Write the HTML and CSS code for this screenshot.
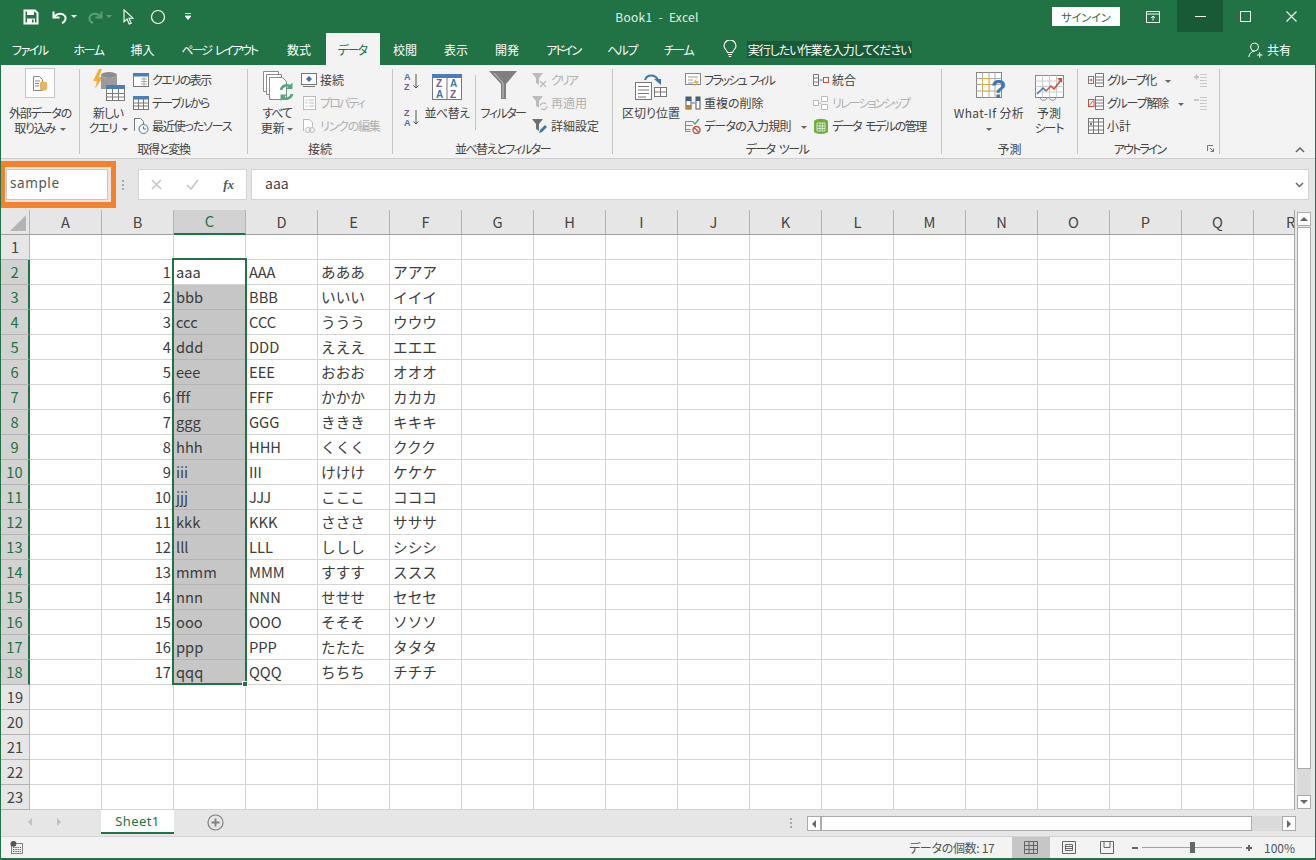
FILE: index.html
```html
<!DOCTYPE html>
<html lang="ja">
<head>
    <meta charset="UTF-8">
    <title>Book1 - Excel</title>
    <link rel="stylesheet" href="styles.css">
</head>
<body>
<div class="window">
    <div class="titlebar">
        <div class="qat">
            <svg class="qat-save" width="16" height="16" viewBox="0 0 16 16"><path d="M1.500 1.500h10.500l2.500 2.500v10.500h-13z" fill="none" stroke="#fff" stroke-width="2"/><rect x="4" y="2" width="7" height="4" fill="#fff"/><rect x="4" y="9.500" width="8" height="5" fill="#fff"/><rect x="9" y="10.500" width="1.500" height="3" fill="#217346"/></svg>
            <svg class="qat-undo" width="16" height="16" viewBox="0 0 16 16"><path d="M2.500 7.500c2-3 8-4 10.500-.5 1.500 2.500 0 6-3 7" fill="none" stroke="#fff" stroke-width="2"/><path d="M1.500 2.500v6h6" fill="none" stroke="#fff" stroke-width="2"/></svg>
            <span class="caret caret-white"></span>
            <svg class="qat-redo" width="16" height="16" viewBox="0 0 16 16"><path d="M13.500 7.500c-2-3-8-4-10.500-.5-1.500 2.500 0 6 3 7" fill="none" stroke="#5f9c7c" stroke-width="2"/><path d="M14.500 2.500v6h-6" fill="none" stroke="#5f9c7c" stroke-width="2"/></svg>
            <span class="caret caret-dim"></span>
            <svg class="qat-cursor" width="11" height="16" viewBox="0 0 11 16"><path d="M1 .8v12l3-2.800 2.200 5 2-.9-2.200-4.900h4z" fill="none" stroke="#fff" stroke-width="1.100"/></svg>
            <svg class="qat-circle" width="16" height="16" viewBox="0 0 16 16"><circle cx="8" cy="8" r="6.500" fill="none" stroke="#fff" stroke-width="1.200"/></svg>
            <svg class="qat-more" width="6" height="7" viewBox="0 0 6 7"><path d="M0 .5h6M0 3h6l-3 3.500z" fill="#fff" stroke="#fff" stroke-width=".8"/></svg>
        </div>
        <div class="doc-title">Book1&nbsp; -&nbsp; Excel</div>
        <div class="win-controls">
            <button class="signin">サインイン</button>
            <svg class="ctl-display" width="14" height="12" viewBox="0 0 14 12"><path d="M.5.500h13v11H.5zM.5 3h13" fill="none" stroke="#fff"/><path d="M7 9.500V5M5 7l2-2 2 2" fill="none" stroke="#fff"/></svg>
            <div class="ctl-min"><span class="min-line"></span></div>
            <div class="ctl-max"></div>
            <svg class="ctl-close" width="11" height="11" viewBox="0 0 11 11"><path d="M.5.500l10 10M10.500.500l-10 10" stroke="#fff" stroke-width="1.100"/></svg>
        </div>
    </div>

    <div class="tabs">
        <span class="tab tab-file tab-kana">ファイル</span>
        <span class="tab tab-kana">ホーム</span>
        <span class="tab">挿入</span>
        <span class="tab tab-kana-narrow tab-page gap">ページ レイアウト</span>
        <span class="tab">数式</span>
        <span class="tab tab-active tab-kana">データ</span>
        <span class="tab">校閲</span>
        <span class="tab">表示</span>
        <span class="tab">開発</span>
        <span class="tab tab-kana-narrow">アドイン</span>
        <span class="tab tab-kana">ヘルプ</span>
        <span class="tab tab-kana">チーム</span>
        <svg class="bulb" width="14" height="18" viewBox="0 0 14 18"><path d="M4.500 12.500C4 10 1 9 1 6a6 6 0 0 1 12 0c0 3-3 4-3.500 6.500zM5 14.500h4M5.800 16.500h2.400" fill="none" stroke="#fff" stroke-width="1.100"/></svg>
        <span class="tell-me">実行したい作業を入力してください</span>
        <span class="share">
            <svg width="15" height="16" viewBox="0 0 15 16"><circle cx="6.500" cy="5" r="4" fill="none" stroke="#fff"/><path d="M.8 15c.5-3.500 2.500-5.500 5.700-5.800M9 13h5.500M11.700 10.300v5.400" fill="none" stroke="#fff"/></svg>
            共有
        </span>
    </div>

    <div class="ribbon">
        <section class="group g-external">
            <div class="group-body">
                <div class="large">
                    <div class="icon-slot">
                        <div class="icon-box">
                            <svg width="20" height="20" viewBox="0 0 20 20"><path d="M3.500 3.500h6l3 3v11h-9z" fill="#fff" stroke="#8a8a8a"/><path d="M5 8h5M5 10.500h4M5 13h4" stroke="#8a8a8a"/><ellipse cx="13.500" cy="10" rx="3.500" ry="1.500" fill="#e8b45c"/><path d="M10 10v6c0 2 7 2 7 0v-6z" fill="#e8b45c"/></svg>
                        </div>
                    </div>
                    <span class="label tight">外部データの</span>
                    <span class="label tight gap">取り込み <i class="caret"></i></span>
                </div>
            </div>
            <div class="group-title">&nbsp;</div>
        </section>

        <section class="group g-get">
            <div class="group-body">
                <div class="large large-query">
                    <div class="icon-slot">
                        <svg width="33" height="34" viewBox="0 0 33 34"><path d="M7 1L1 13h4l-2 8 8-12H7l3-8z" fill="#f0b13c"/><ellipse cx="17" cy="7" rx="8" ry="3" fill="#8c8c8c"/><path d="M9 7v14h16V7c-1 4-15 4-16 0z" fill="#9b9b9b"/><rect x="14.500" y="17.500" width="18" height="15" fill="#fff" stroke="#7a7a7a"/><rect x="14" y="17" width="19" height="4" fill="#4a7ebb"/><path d="M14.500 25.500h18M14.500 29h18M20.500 21v11M26.500 21v11" stroke="#7a7a7a"/></svg>
                    </div>
                    <span class="label tight">新しい</span>
                    <span class="label tight gap">クエリ <i class="caret"></i></span>
                </div>
                <div class="small-col">
                    <div class="small">
                        <svg width="16" height="16" viewBox="0 0 16 16"><rect x=".5" y="1.500" width="15" height="13" fill="#fff" stroke="#777"/><rect y="1" width="16" height="3.500" fill="#4a7ebb"/><path d="M8 7h6M8 9.500h6M8 12h6M11 5v9" stroke="#aaa"/></svg>
                        <span class="tighter">クエリの表示</span>
                    </div>
                    <div class="small">
                        <svg width="16" height="16" viewBox="0 0 16 16"><rect x=".5" y="1.500" width="15" height="13" fill="#fff" stroke="#777"/><rect y="1" width="16" height="3.500" fill="#4a7ebb"/><path d="M.5 8h15M.5 11h15M5.500 4v10M10.500 4v10" stroke="#777"/></svg>
                        <span class="tighter">テーブルから</span>
                    </div>
                    <div class="small">
                        <svg width="16" height="16" viewBox="0 0 16 16"><path d="M1.500 13V.5h6l3 3v3" fill="#fff" stroke="#777"/><circle cx="10.500" cy="11" r="4.500" fill="#fff" stroke="#3f76b0"/><path d="M10.500 8.500V11h2.500" fill="none" stroke="#3f76b0"/></svg>
                        <span class="tight">最近使ったソース</span>
                    </div>
                </div>
            </div>
            <div class="group-title tight">取得と変換</div>
        </section>

        <section class="group g-conn">
            <div class="group-body">
                <div class="large large-refresh">
                    <div class="icon-slot">
                        <svg width="31" height="32" viewBox="0 0 31 32"><path d="M.5 1.500h15v20H.5z" fill="#fff" stroke="#8a8a8a"/><path d="M3.500 4.500h15v20h-15z" fill="#fff" stroke="#8a8a8a"/><path d="M6.500 7.500h13l4 4v18h-17z" fill="#fff" stroke="#8a8a8a"/><path d="M18 20a6 6 0 0 1 10-3" fill="none" stroke="#53a77f" stroke-width="2.600"/><path d="M29.500 12.500v6.500H23z" fill="#53a77f"/><path d="M29 24a6 6 0 0 1-10 3" fill="none" stroke="#53a77f" stroke-width="2.600"/><path d="M17.500 31v-6.500H24z" fill="#53a77f"/></svg>
                    </div>
                    <span class="label tight">すべて</span>
                    <span class="label">更新 <i class="caret"></i></span>
                </div>
                <div class="small-col">
                    <div class="small">
                        <svg width="16" height="16" viewBox="0 0 16 16"><rect x=".5" y="1.500" width="15" height="11" fill="#fff" stroke="#777"/><path d="M8 4l3 3-3 3-3-3z" fill="#3f76b0"/><path d="M2 14.500h12" stroke="#777"/></svg>
                        <span>接続</span>
                    </div>
                    <div class="small disabled">
                        <svg width="16" height="16" viewBox="0 0 16 16"><rect x="2.500" y="1.500" width="12" height="13" fill="#fff" stroke="#bbb"/><path d="M4.500 5h2M8 5h5M4.500 8h2M8 8h5M4.500 11h2M8 11h5" stroke="#bbb"/></svg>
                        <span class="tightest">プロパティ</span>
                    </div>
                    <div class="small disabled">
                        <svg width="16" height="16" viewBox="0 0 16 16"><path d="M2.500 13V1.500h6l3 3v4" fill="#fff" stroke="#bbb"/><circle cx="7" cy="12" r="2.500" fill="none" stroke="#bbb"/><circle cx="11" cy="12" r="2.500" fill="none" stroke="#bbb"/></svg>
                        <span class="tight">リンクの編集</span>
                    </div>
                </div>
            </div>
            <div class="group-title">接続</div>
        </section>

        <section class="group g-sort">
            <div class="group-body">
                <div class="sort-col">
                    <svg width="16" height="20" viewBox="0 0 16 20"><text class="sort-letter letter-blue" x="0" y="8.500">A</text><text class="sort-letter letter-purple" x="0" y="19">Z</text><path d="M12 3v14M9.500 14.500L12 17l2.500-2.500" fill="none" stroke="#555"/></svg>
                    <svg width="16" height="20" viewBox="0 0 16 20"><text class="sort-letter letter-purple" x="0" y="8.500">Z</text><text class="sort-letter letter-blue" x="0" y="19">A</text><path d="M12 3v14M9.500 14.500L12 17l2.500-2.500" fill="none" stroke="#555"/></svg>
                </div>
                <div class="large large-sort">
                    <div class="icon-slot">
                        <svg width="30" height="26" viewBox="0 0 30 26"><rect x=".5" y=".5" width="29" height="25" fill="#fff" stroke="#777"/><rect width="30" height="4" fill="#4a7ebb"/><path d="M15 4v22" stroke="#777"/><text class="sort-big letter-purple" x="4" y="13">Z</text><text class="sort-big letter-blue" x="18" y="13">A</text><text class="sort-big letter-blue" x="4" y="24">A</text><text class="sort-big letter-purple" x="18" y="24">Z</text></svg>
                    </div>
                    <span class="label slight">並べ替え</span>
                </div>
                <div class="divider"></div>
                <div class="large large-filter">
                    <div class="icon-slot">
                        <svg width="28" height="28" viewBox="0 0 28 28"><path d="M0 0h28L17 13v15h-5V13z" fill="#7f7f7f"/><path d="M5 2l9 10v15" fill="none" stroke="#c4c4c4"/></svg>
                    </div>
                    <span class="label tighter">フィルター</span>
                </div>
                <div class="small-col">
                    <div class="small disabled">
                        <svg width="16" height="16" viewBox="0 0 16 16"><path d="M0 1h11L7 6v7l-3-2V6z" fill="#bbb"/><path d="M8 9l6 6M14 9l-6 6" stroke="#bbb" stroke-width="1.400"/></svg>
                        <span class="tightest">クリア</span>
                    </div>
                    <div class="small disabled">
                        <svg width="16" height="16" viewBox="0 0 16 16"><path d="M0 1h11L7 6v7l-3-2V6z" fill="#bbb"/><path d="M8 11a3.500 3.500 0 0 1 6-2M15 11a3.500 3.500 0 0 1-6 2.500" fill="none" stroke="#bbb" stroke-width="1.300"/></svg>
                        <span>再適用</span>
                    </div>
                    <div class="small">
                        <svg width="16" height="16" viewBox="0 0 16 16"><path d="M0 1h11L7 6v7l-3-2V6z" fill="#6f6f6f"/><path d="M7 15l1-3 5-5 2 2-5 5z" fill="#3f76b0"/></svg>
                        <span>詳細設定</span>
                    </div>
                </div>
            </div>
            <div class="group-title tighter">並べ替えとフィルター</div>
        </section>

        <section class="group g-tools">
            <div class="group-body">
                <div class="large large-split">
                    <div class="icon-slot">
                        <svg width="32" height="27" viewBox="0 0 32 27"><rect x=".5" y="9.500" width="16" height="17" fill="#fff" stroke="#777"/><path d="M3 13.500h11M3 17h11M3 20.500h11M3 24h8" stroke="#777"/><rect x="19.500" y="14.500" width="12" height="9" fill="#fff" stroke="#777"/><path d="M19.500 19h12M25.500 14.500v9" stroke="#777"/><path d="M10 7c2-6 10-6 13 0" fill="none" stroke="#3f76b0" stroke-width="2"/><path d="M19 6h7v6z" fill="#3f76b0"/></svg>
                    </div>
                    <span class="label">区切り位置</span>
                </div>
                <div class="small-col col-tools">
                    <div class="small">
                        <svg width="16" height="16" viewBox="0 0 16 16"><rect x=".5" y="1.500" width="15" height="11" fill="#fff" stroke="#888"/><path d="M3 5h10M3 8h5M3 11h5" stroke="#999"/><path d="M12 6l-4 5h3l-1 4 4-6h-3z" fill="#f0b13c"/></svg>
                        <span class="tightest gap">フラッシュ フィル</span>
                    </div>
                    <div class="small">
                        <svg width="16" height="16" viewBox="0 0 16 16"><rect x="1" y="2" width="5" height="12" fill="#fff" stroke="#555"/><rect x="1" y="2" width="5" height="4" fill="#3f5f85"/><rect x="1" y="10" width="5" height="4" fill="#b08a3a"/><rect x="11" y="2" width="4" height="12" fill="#fff" stroke="#555"/><rect x="11" y="2" width="4" height="4" fill="#3f5f85"/><path d="M7 8h3" stroke="#3f76b0"/></svg>
                        <span>重複の削除</span>
                    </div>
                    <div class="small">
                        <svg width="16" height="16" viewBox="0 0 16 16"><path d="M.5 3.500h8M.5 7.500h7M.5 11.500h5M.5 3.500v10h5" fill="none" stroke="#888"/><path d="M8 4l2 2 4-5" fill="none" stroke="#53a77f" stroke-width="1.500"/><circle cx="11.500" cy="12" r="3.500" fill="#fff" stroke="#c8503c" stroke-width="1.400"/><path d="M9 9.500l5 5" stroke="#c8503c" stroke-width="1.400"/></svg>
                        <span class="slightish">データの入力規則 <i class="caret caret-wide"></i></span>
                    </div>
                </div>
                <div class="small-col">
                    <div class="small">
                        <svg width="16" height="16" viewBox="0 0 16 16"><path d="M.5 2.500h5v11h-5zM.5 6h5M.5 10h5" fill="#fff" stroke="#777"/><path d="M6.500 8h3" stroke="#3f76b0"/><rect x="10.500" y="5.500" width="5" height="5" fill="#fff" stroke="#c8503c"/></svg>
                        <span>統合</span>
                    </div>
                    <div class="small disabled">
                        <svg width="16" height="16" viewBox="0 0 16 16"><path d="M.5 5.500h5v5h-5zM8.500 1.500h6v5h-6zM8.500 9.500h6v5h-6zM5.500 8h3" fill="#fff" stroke="#bbb"/></svg>
                        <span class="tightest">リレーションシップ</span>
                    </div>
                    <div class="small">
                        <svg width="16" height="16" viewBox="0 0 16 16"><path d="M1 3c3-3 11-3 14 0v11c-3 2.500-11 2.500-14 0z" fill="#6cae3f"/><path d="M4 5h8v8H4zM4 8h8M4 10.500h8M7 5v8M9.500 5v8" fill="none" stroke="#e5f1da" stroke-width=".8"/></svg>
                        <span class="tighter gap">データ モデルの管理</span>
                    </div>
                </div>
            </div>
            <div class="group-title tighter gap">データ ツール</div>
        </section>

        <section class="group g-forecast">
            <div class="group-body">
                <div class="large large-whatif">
                    <div class="icon-slot">
                        <svg width="31" height="30" viewBox="0 0 31 30"><rect x=".5" y=".5" width="25" height="25" fill="#fff" stroke="#888"/><path d="M.5 6.500h25M.5 12.500h25M.5 19h25M6.500.5v25M13 .5v25M19 .5v25" stroke="#aaa"/><path d="M6.500 6.500H13v6H6.500zM6.500 12.500H13V19H6.500z" fill="#fff" stroke="#e0a93c"/><text class="whatif-mark" x="15" y="26">?</text></svg>
                    </div>
                    <span class="label wide">What-If 分析</span>
                    <span class="label"><i class="caret"></i></span>
                </div>
                <div class="large large-forecast">
                    <div class="icon-slot">
                        <svg width="29" height="27" viewBox="0 0 29 27"><rect x=".5" y=".5" width="28" height="22" fill="#fff" stroke="#888"/><path d="M.5 6h28M.5 11.500h28M.5 17h28M7.500.5v22M14.500.5v22M21.500.5v22" stroke="#ccc"/><path d="M2 19l6-6 3 3" fill="none" stroke="#3f76b0" stroke-width="1.500"/><path d="M11 16l5-5 3 3 7-9" fill="none" stroke="#c8503c" stroke-width="1.500"/><path d="M22 3h5v5z" fill="#c8503c"/><path d="M5 23c1 3 6 3 7 0M14 23c1 3 6 3 7 0" fill="none" stroke="#888"/></svg>
                    </div>
                    <span class="label">予測</span>
                    <span class="label tight">シート</span>
                </div>
            </div>
            <div class="group-title">予測</div>
        </section>

        <section class="group g-outline">
            <div class="group-body">
                <div class="small-col col-outline">
                    <div class="small">
                        <svg width="16" height="16" viewBox="0 0 16 16"><rect x=".5" y="4.500" width="5" height="7" fill="#fff" stroke="#777"/><path d="M1.500 8h3M3 6.500v3" stroke="#c8503c"/><path d="M7.500 1.500h8v13h-8zM7.500 5h8M7.500 8h8M7.500 11h8" fill="#fff" stroke="#777"/></svg>
                        <span class="tighter">グループ化 <i class="caret caret-wide"></i></span>
                    </div>
                    <div class="small">
                        <svg width="16" height="16" viewBox="0 0 16 16"><rect x=".5" y="4.500" width="5.500" height="7" fill="#fff" stroke="#c8503c"/><path d="M1.500 10.500l3.500-5" stroke="#c8503c"/><path d="M7.500 1.500h8v13h-8zM7.500 5h8M7.500 8h8M7.500 11h8" fill="#fff" stroke="#777"/></svg>
                        <span class="tight">グループ解除 <i class="caret caret-wide"></i></span>
                    </div>
                    <div class="small">
                        <svg width="16" height="16" viewBox="0 0 16 16"><rect x=".5" y=".5" width="15" height="15" fill="#fff" stroke="#777"/><path d="M5.500.5v15M.5 4h15M.5 8h15M.5 12h15M10.500.5v15" stroke="#777"/><path d="M2 6h2M3 5v2" stroke="#555"/></svg>
                        <span>小計</span>
                    </div>
                </div>
                <div class="small-col">
                    <div class="small disabled">
                        <svg width="16" height="16" viewBox="0 0 16 16"><path d="M1 5h5M3.500 2.500v5" stroke="#bbb" stroke-width="1.500"/><path d="M7 2.500h7M7 5.500h7M7 8.500h7M7 11.500h7M7 14.500h7" stroke="#c8c8c8"/></svg>
                    </div>
                    <div class="small disabled">
                        <svg width="16" height="16" viewBox="0 0 16 16"><path d="M1 5h5" stroke="#bbb" stroke-width="1.500"/><path d="M7 2.500h7M7 5.500h7M7 8.500h7M7 11.500h7M7 14.500h7" stroke="#c8c8c8"/></svg>
                    </div>
                </div>
            </div>
            <div class="group-title title-outline tightest">
                アウトライン
                <svg class="launcher" width="7" height="7" viewBox="0 0 7 7"><path d="M.5 6V.5H6M3 3l3.500 3.500M3.500 6.500h3v-3" fill="none" stroke="#777"/></svg>
            </div>
        </section>

        <svg class="collapse" width="10" height="6" viewBox="0 0 10 6"><path d="M1 5l4-4 4 4" fill="none" stroke="#666" stroke-width="1.500"/></svg>
    </div>

    <div class="formula-bar">
        <div class="name-box">sample</div>
        <div class="grip"></div>
        <div class="fx-box">
            <svg width="11" height="11" viewBox="0 0 11 11"><path d="M1 1l9 9M10 1l-9 9" stroke="#c4c4c4" stroke-width="1.500"/></svg>
            <svg width="13" height="11" viewBox="0 0 13 11"><path d="M1 6l4 4 7-9" fill="none" stroke="#c4c4c4" stroke-width="1.500"/></svg>
            <span class="fx">fx</span>
        </div>
        <div class="formula-input">
            <span class="formula-text">aaa</span>
            <svg width="9" height="6" viewBox="0 0 9 6"><path d="M1 1l3.500 3.500L8 1" fill="none" stroke="#666" stroke-width="1.500"/></svg>
        </div>
    </div>
    <div class="name-highlight"></div>

    <div class="sheet-area">
        <div class="grid-view">
            <table class="grid">
                <colgroup>
                    <col class="col-head"><col span="18" class="col-cell">
                </colgroup>
                <thead>
                    <tr><th class="corner"><span class="corner-mark"></span></th><th>A</th><th>B</th><th class="sel">C</th><th>D</th><th>E</th><th>F</th><th>G</th><th>H</th><th>I</th><th>J</th><th>K</th><th>L</th><th>M</th><th>N</th><th>O</th><th>P</th><th>Q</th><th class="col-r">R</th></tr>
                </thead>
                <tbody>
                    <tr><th>1</th><td></td><td></td><td></td><td></td><td></td><td></td><td></td><td></td><td></td><td></td><td></td><td></td><td></td><td></td><td></td><td></td><td></td><td></td></tr>
                    <tr><th class="sel">2</th><td></td><td class="num">1</td><td class="active">aaa</td><td>AAA</td><td>あああ</td><td>アアア</td><td></td><td></td><td></td><td></td><td></td><td></td><td></td><td></td><td></td><td></td><td></td><td></td></tr>
                    <tr><th class="sel">3</th><td></td><td class="num">2</td><td class="sel">bbb</td><td>BBB</td><td>いいい</td><td>イイイ</td><td></td><td></td><td></td><td></td><td></td><td></td><td></td><td></td><td></td><td></td><td></td><td></td></tr>
                    <tr><th class="sel">4</th><td></td><td class="num">3</td><td class="sel">ccc</td><td>CCC</td><td>ううう</td><td>ウウウ</td><td></td><td></td><td></td><td></td><td></td><td></td><td></td><td></td><td></td><td></td><td></td><td></td></tr>
                    <tr><th class="sel">5</th><td></td><td class="num">4</td><td class="sel">ddd</td><td>DDD</td><td>えええ</td><td>エエエ</td><td></td><td></td><td></td><td></td><td></td><td></td><td></td><td></td><td></td><td></td><td></td><td></td></tr>
                    <tr><th class="sel">6</th><td></td><td class="num">5</td><td class="sel">eee</td><td>EEE</td><td>おおお</td><td>オオオ</td><td></td><td></td><td></td><td></td><td></td><td></td><td></td><td></td><td></td><td></td><td></td><td></td></tr>
                    <tr><th class="sel">7</th><td></td><td class="num">6</td><td class="sel">fff</td><td>FFF</td><td>かかか</td><td>カカカ</td><td></td><td></td><td></td><td></td><td></td><td></td><td></td><td></td><td></td><td></td><td></td><td></td></tr>
                    <tr><th class="sel">8</th><td></td><td class="num">7</td><td class="sel">ggg</td><td>GGG</td><td>ききき</td><td>キキキ</td><td></td><td></td><td></td><td></td><td></td><td></td><td></td><td></td><td></td><td></td><td></td><td></td></tr>
                    <tr><th class="sel">9</th><td></td><td class="num">8</td><td class="sel">hhh</td><td>HHH</td><td>くくく</td><td>ククク</td><td></td><td></td><td></td><td></td><td></td><td></td><td></td><td></td><td></td><td></td><td></td><td></td></tr>
                    <tr><th class="sel">10</th><td></td><td class="num">9</td><td class="sel">iii</td><td>III</td><td>けけけ</td><td>ケケケ</td><td></td><td></td><td></td><td></td><td></td><td></td><td></td><td></td><td></td><td></td><td></td><td></td></tr>
                    <tr><th class="sel">11</th><td></td><td class="num">10</td><td class="sel">jjj</td><td>JJJ</td><td>こここ</td><td>コココ</td><td></td><td></td><td></td><td></td><td></td><td></td><td></td><td></td><td></td><td></td><td></td><td></td></tr>
                    <tr><th class="sel">12</th><td></td><td class="num">11</td><td class="sel">kkk</td><td>KKK</td><td>さささ</td><td>サササ</td><td></td><td></td><td></td><td></td><td></td><td></td><td></td><td></td><td></td><td></td><td></td><td></td></tr>
                    <tr><th class="sel">13</th><td></td><td class="num">12</td><td class="sel">lll</td><td>LLL</td><td>ししし</td><td>シシシ</td><td></td><td></td><td></td><td></td><td></td><td></td><td></td><td></td><td></td><td></td><td></td><td></td></tr>
                    <tr><th class="sel">14</th><td></td><td class="num">13</td><td class="sel">mmm</td><td>MMM</td><td>すすす</td><td>ススス</td><td></td><td></td><td></td><td></td><td></td><td></td><td></td><td></td><td></td><td></td><td></td><td></td></tr>
                    <tr><th class="sel">15</th><td></td><td class="num">14</td><td class="sel">nnn</td><td>NNN</td><td>せせせ</td><td>セセセ</td><td></td><td></td><td></td><td></td><td></td><td></td><td></td><td></td><td></td><td></td><td></td><td></td></tr>
                    <tr><th class="sel">16</th><td></td><td class="num">15</td><td class="sel">ooo</td><td>OOO</td><td>そそそ</td><td>ソソソ</td><td></td><td></td><td></td><td></td><td></td><td></td><td></td><td></td><td></td><td></td><td></td><td></td></tr>
                    <tr><th class="sel">17</th><td></td><td class="num">16</td><td class="sel">ppp</td><td>PPP</td><td>たたた</td><td>タタタ</td><td></td><td></td><td></td><td></td><td></td><td></td><td></td><td></td><td></td><td></td><td></td><td></td></tr>
                    <tr><th class="sel">18</th><td></td><td class="num">17</td><td class="sel">qqq</td><td>QQQ</td><td>ちちち</td><td>チチチ</td><td></td><td></td><td></td><td></td><td></td><td></td><td></td><td></td><td></td><td></td><td></td><td></td></tr>
                    <tr><th>19</th><td></td><td></td><td></td><td></td><td></td><td></td><td></td><td></td><td></td><td></td><td></td><td></td><td></td><td></td><td></td><td></td><td></td><td></td></tr>
                    <tr><th>20</th><td></td><td></td><td></td><td></td><td></td><td></td><td></td><td></td><td></td><td></td><td></td><td></td><td></td><td></td><td></td><td></td><td></td><td></td></tr>
                    <tr><th>21</th><td></td><td></td><td></td><td></td><td></td><td></td><td></td><td></td><td></td><td></td><td></td><td></td><td></td><td></td><td></td><td></td><td></td><td></td></tr>
                    <tr><th>22</th><td></td><td></td><td></td><td></td><td></td><td></td><td></td><td></td><td></td><td></td><td></td><td></td><td></td><td></td><td></td><td></td><td></td><td></td></tr>
                    <tr><th>23</th><td></td><td></td><td></td><td></td><td></td><td></td><td></td><td></td><td></td><td></td><td></td><td></td><td></td><td></td><td></td><td></td><td></td><td></td></tr>
                </tbody>
            </table>
            <div class="selection"><span class="fill-handle"></span></div>
        </div>
        <div class="vscroll">
            <div class="sb-btn"><i class="tri tri-up"></i></div>
            <div class="vthumb"></div>
            <div class="sb-track"></div>
            <div class="sb-btn"><i class="tri tri-down"></i></div>
        </div>
    </div>

    <div class="tabbar">
        <div class="sheet-nav">
            <i class="tri tri-left tri-dim"></i>
            <i class="tri tri-right tri-dim"></i>
        </div>
        <div class="sheet-tab">Sheet1</div>
        <svg class="add-sheet" width="17" height="17" viewBox="0 0 17 17"><circle cx="8.500" cy="8.500" r="7.500" fill="none" stroke="#808080" stroke-width="1.200"/><path d="M8.500 4.500v8M4.500 8.500h8" stroke="#808080" stroke-width="1.800"/></svg>
        <div class="grip grip-tab"></div>
        <div class="hscroll">
            <div class="sb-btn"><i class="tri tri-left"></i></div>
            <div class="hthumb"></div>
            <div class="sb-track"></div>
            <div class="sb-btn"><i class="tri tri-right"></i></div>
        </div>
    </div>

    <div class="statusbar">
        <svg class="macro" width="13" height="13" viewBox="0 0 13 13"><circle cx="3.500" cy="3" r="3" fill="#666"/><rect x="1.500" y="2.500" width="11" height="10" fill="#f3f3f3" stroke="#666" stroke-width=".8"/><circle cx="3.500" cy="3" r="2.800" fill="#555"/><path d="M3 6.500h8M3 8.500h8M3 10.500h8" stroke="#666" stroke-dasharray="1.500 .8"/></svg>
        <span class="status-text">データの個数: 17</span>
        <div class="view-btn view-active">
            <svg width="14" height="13" viewBox="0 0 14 13"><path d="M.5.500h13v12H.5zM.5 4.500h13M.5 8.500h13M5 .5v12M9.500.5v12" fill="none" stroke="#666"/></svg>
        </div>
        <div class="view-btn">
            <svg width="14" height="13" viewBox="0 0 14 13"><path d="M.5.500h13v12H.5zM3.500 3.500h7v6h-7zM3.500 5.500h7M3.500 7.500h7" fill="none" stroke="#666"/></svg>
        </div>
        <div class="view-btn">
            <svg width="14" height="13" viewBox="0 0 14 13"><path d="M.5.500h13v12H.5zM4 .5v6h6v-6" fill="none" stroke="#666"/></svg>
        </div>
        <div class="zoom">
            <span class="zoom-sign"></span>
            <div class="zoom-track"><span class="zoom-thumb"></span></div>
            <span class="zoom-sign zoom-plus"></span>
            <span class="zoom-value">100%</span>
        </div>
    </div>
</div>
</body>
</html>
```

FILE: styles.css
```css
* {
    box-sizing: border-box;
}
body {
    margin: 0;
    background: #217346;
    font-family: "Noto Sans CJK JP", "Noto Sans", sans-serif;
    font-size: 12px;
    color: #444;
    font-feature-settings: "palt";
}
.window {
    position: relative;
    display: flex;
    flex-direction: column;
    width: 1316px;
    height: 860px;
    overflow: hidden;
    border: 1px solid #217346;
    border-top: 0;
    border-bottom-width: 2px;
    background: #217346;
}
svg {
    display: block;
    flex: none;
}

/* kana in the ribbon runs narrower than this font */
.slight {
    letter-spacing: -.5px;
}
.slightish {
    letter-spacing: -.8px;
}
.tight {
    letter-spacing: -1.2px;
}
.tighter {
    letter-spacing: -1.5px;
}
.tightest {
    letter-spacing: -1.9px;
}
.wide {
    letter-spacing: .35px;
}
.gap {
    word-spacing: 3px;
}

/* title bar */
.titlebar {
    display: flex;
    align-items: center;
    justify-content: space-between;
    height: 33px;
    color: #fff;
}
.qat {
    display: flex;
    align-items: center;
    width: 300px;
    padding-left: 22px;
}
.qat-undo {
    margin-left: 13px;
}
.qat-redo {
    margin-left: 10px;
}
.qat-cursor {
    margin-left: 11px;
}
.qat-circle {
    margin-left: 16px;
}
.qat-more {
    margin-left: 19px;
}
.doc-title {
    position: absolute;
    left: 556px;
    top: 8px;
    width: 200px;
    text-align: center;
    letter-spacing: .3px;
    color: #e4efe9;
}
.win-controls {
    display: flex;
    align-items: center;
    height: 33px;
}
.signin {
    width: 68px;
    height: 19px;
    margin-right: 26px;
    padding: 0;
    border: 0;
    background: #fff;
    color: #217346;
    font: inherit;
    font-size: 11px;
}
.ctl-min {
    display: flex;
    align-items: center;
    justify-content: center;
    width: 46px;
    height: 32px;
    margin: 0 0 1px 17px;
    background: #185a36;
}
.min-line {
    width: 11px;
    height: 1px;
    background: #fff;
}
.ctl-max {
    width: 11px;
    height: 11px;
    margin: 0 35px 0 17px;
    border: 1px solid #fff;
}
.ctl-close {
    margin-right: 18px;
}

/* ribbon tabs */
.tabs {
    position: relative;
    display: flex;
    align-items: center;
    height: 32px;
}
.tab {
    display: flex;
    align-items: center;
    height: 32px;
    padding: 0 13.5px;
    color: #fff;
    white-space: nowrap;
}
.tab-kana {
    letter-spacing: -1.5px;
}
.tab-kana-narrow {
    letter-spacing: -2px;
}
.tab-file {
    padding: 0 12.5px 0 11px;
}
.tab-page {
    margin-right: 3px;
}
.tab-active {
    padding: 0 13px 0 12px;
    margin: 0 0 0 1px;
    background: #f3f3f3;
    color: #217346;
}
.bulb {
    margin-left: 16px;
}
.tell-me {
    margin-left: 10px;
    padding: 0 1px;
    height: 17px;
    line-height: 17px;
    background: #185a36;
    color: #fff;
    letter-spacing: -1px;
    white-space: nowrap;
}
.share {
    display: flex;
    align-items: center;
    gap: 4px;
    position: absolute;
    left: 1247px;
    top: 8px;
    color: #fff;
}

.ribbon {
    position: relative;
    display: flex;
    flex: none;
    height: 94px;
    padding-top: 4px;
    border-bottom: 1px solid #cfcfcf;
    background: #f3f3f3;
}
.group {
    display: flex;
    flex-direction: column;
    flex: none;
    height: 85px;
    border-right: 1px solid #c6c6c6;
}
.g-external {
    width: 79px;
}
.g-get {
    width: 168px;
}
.g-conn {
    width: 145px;
}
.g-sort {
    width: 220px;
}
.g-tools {
    width: 329px;
}
.g-forecast {
    width: 136px;
}
.g-outline {
    width: 142px;
}
.group-body {
    display: flex;
    height: 72px;
}
.group-title {
    height: 14px;
    line-height: 17px;
    text-align: center;
    white-space: nowrap;
}
.title-outline {
    position: relative;
    padding-right: 18px;
}
.launcher {
    position: absolute;
    right: 5px;
    top: 5px;
}
.collapse {
    position: absolute;
    left: 1294px;
    top: 82px;
}
.large {
    display: flex;
    flex-direction: column;
    align-items: center;
    flex: none;
    white-space: nowrap;
}
.label {
    height: 15px;
    line-height: 15px;
}
.icon-slot {
    display: flex;
    align-items: flex-end;
    justify-content: center;
    height: 36px;
    padding-bottom: 3px;
}
.icon-box {
    display: flex;
    align-items: center;
    justify-content: center;
    width: 30px;
    height: 30px;
    margin-bottom: 4px;
    border: 1px solid #c6c6c6;
    background: #fcfcfc;
}
.g-external .large {
    width: 78px;
}
.large-query {
    width: 40px;
    margin-left: 8px;
}
.small-col {
    display: flex;
    flex-direction: column;
    flex: none;
}
.small {
    display: flex;
    align-items: center;
    gap: 3px;
    height: 23px;
    padding-bottom: 2px;
    white-space: nowrap;
}
.disabled {
    color: #b1b1b1;
}
.g-get .small-col {
    margin-left: 5px;
}
.large-refresh {
    width: 40px;
    margin-left: 9px;
}
.large-refresh svg {
    margin-left: 2px;
}
.g-conn .small-col {
    margin-left: 4px;
}
.sort-col {
    display: flex;
    flex-direction: column;
    gap: 16px;
    width: 20px;
    margin: 2px 0 0 11px;
}
.sort-letter {
    font-family: "Liberation Sans", sans-serif;
    font-size: 9px;
    font-weight: 700;
}
.sort-big {
    font-family: "Liberation Sans", sans-serif;
    font-size: 10px;
    font-weight: 700;
}
.letter-blue {
    fill: #3f76b0;
}
.letter-purple {
    fill: #7a5a9e;
}
.large-sort {
    width: 46px;
}
.large-sort .icon-slot {
    padding-bottom: 5px;
}
.large-filter {
    width: 48px;
}
.large-filter .icon-slot {
    padding-bottom: 6px;
}
.divider {
    width: 1px;
    height: 55px;
    margin: 6px 3px 0 5px;
    background: #c6c6c6;
}
.g-sort .small-col {
    margin-left: 5px;
}
.large-split {
    width: 60px;
    margin-left: 8px;
}
.large-split .icon-slot {
    padding-bottom: 5px;
}
.col-tools {
    width: 128px;
    margin-left: 4px;
}
.caret {
    display: inline-block;
    width: 0;
    height: 0;
    vertical-align: middle;
    border-left: 3px solid transparent;
    border-right: 3px solid transparent;
    border-top: 3px solid #666;
}
.caret-wide {
    margin-left: 8px;
}
.caret-white {
    margin-left: 3px;
    border-top-color: #fff;
}
.caret-dim {
    margin-left: 3px;
    border-top-color: #5f9c7c;
}
.large-whatif {
    width: 76px;
    margin-left: 9px;
}
.large-whatif .icon-slot {
    padding-left: 4px;
}
.whatif-mark {
    font-family: "Liberation Sans", sans-serif;
    font-size: 25px;
    font-weight: 700;
    fill: #3f76b0;
}
.large-forecast {
    width: 36px;
    margin-left: 4px;
}
.col-outline {
    width: 105px;
    margin-left: 10px;
}

/* formula bar */
.formula-bar {
    display: flex;
    align-items: center;
    flex: none;
    height: 51px;
    background: #e6e6e6;
}
.name-box {
    width: 102px;
    height: 31px;
    margin-left: 5px;
    padding-left: 3px;
    line-height: 26px;
    border: 1px solid #c6c6c6;
    background: #fff;
    font-family: "Noto Sans", sans-serif;
    font-size: 13.5px;
    letter-spacing: .6px;
    color: #555;
}
.grip {
    width: 2px;
    height: 10px;
    margin: 0 14px;
    background: repeating-linear-gradient(#a8a8a8 0 2px, transparent 2px 4px);
}
.fx-box {
    display: flex;
    align-items: center;
    justify-content: space-between;
    width: 109px;
    height: 31px;
    padding: 0 12px;
    border: 1px solid #d4d4d4;
    background: #fff;
}
.fx {
    font-family: "Liberation Serif", serif;
    font-size: 13px;
    font-style: italic;
    font-weight: 700;
    color: #555;
}
.formula-input {
    display: flex;
    align-items: center;
    justify-content: space-between;
    width: 1058px;
    height: 31px;
    margin-left: 4px;
    padding: 0 4px 0 13px;
    border: 1px solid #d4d4d4;
    background: #fff;
    font-size: 14px;
    color: #444;
}
.formula-text {
    margin-bottom: 3px;
}
.name-highlight {
    position: absolute;
    left: -1px;
    top: 161px;
    width: 116px;
    height: 47px;
    border: 5px solid #f5822a;
    border-top-width: 6px;
    border-bottom-width: 6px;
}

/* sheet */
.sheet-area {
    display: flex;
    flex: none;
    height: 600px;
    background: #e6e6e6;
}
.grid-view {
    position: relative;
    width: 1294px;
    overflow: hidden;
    border-right: 1px solid #a6a6a6;
}
.grid {
    table-layout: fixed;
    width: 1325px;
    border-collapse: separate;
    border-spacing: 0;
    background: #fff;
    font-size: 14.67px;
    font-feature-settings: normal;
}
.col-head {
    width: 29px;
}
.col-cell {
    width: 72px;
}
.grid th {
    height: 25px;
    padding: 0 0 2px;
    border-right: 1px solid #b4b4b4;
    border-bottom: 1px solid #b4b4b4;
    background: #e6e6e6;
    font-weight: 400;
    color: #444;
}
.grid thead th {
    border-bottom: 1px solid #9f9f9f;
}
.grid thead th.sel {
    border-bottom: 2px solid #217346;
    background: #d2d2d2;
    color: #217346;
}
.grid tbody th.sel {
    border-right: 2px solid #217346;
    background: #d2d2d2;
    color: #217346;
}
.grid .col-r {
    padding-left: 32px;
    text-align: left;
}
.corner {
    position: relative;
}
.corner-mark {
    position: absolute;
    left: 9px;
    bottom: 3px;
    border-left: 16px solid transparent;
    border-bottom: 16px solid #b4b4b4;
}
.grid td {
    height: 25px;
    padding: 0 0 2px 3px;
    border-right: 1px solid #d4d4d4;
    border-bottom: 1px solid #d4d4d4;
    line-height: 21px;
    white-space: nowrap;
    overflow: hidden;
    color: #3c3c3c;
}
.grid td.num {
    padding: 0 2px 2px 0;
    text-align: right;
}
.grid td.sel,
.grid td.active {
    padding-left: 2px;
}
.grid td.sel {
    border-right-color: #b4b4b4;
    border-bottom-color: #b4b4b4;
    background: #c6c6c6;
}
.selection {
    position: absolute;
    left: 171px;
    top: 48px;
    width: 75px;
    height: 427px;
    border: 2px solid #217346;
}
.fill-handle {
    position: absolute;
    right: -3px;
    bottom: -4px;
    width: 6px;
    height: 6px;
    background: #217346;
    border: 1px solid #fff;
}
.vscroll {
    display: flex;
    flex-direction: column;
    align-items: center;
    width: 20px;
    padding: 2px 2px 1px 0;
}
.sb-btn {
    display: flex;
    align-items: center;
    justify-content: center;
    flex: none;
    width: 14px;
    height: 14px;
    border: 1px solid #ababab;
    background: #fff;
}
.vthumb {
    flex: none;
    width: 14px;
    height: 542px;
    margin-top: 1px;
    border: 1px solid #ababab;
    background: #fff;
}
.sb-track {
    flex: 1;
    background: #dadada;
}
.vscroll .sb-track {
    width: 14px;
}
.tri {
    display: block;
    width: 0;
    height: 0;
}
.tri-up {
    border-left: 4px solid transparent;
    border-right: 4px solid transparent;
    border-bottom: 4px solid #666;
}
.tri-down {
    border-left: 4px solid transparent;
    border-right: 4px solid transparent;
    border-top: 4px solid #666;
}
.tri-left {
    border-top: 4px solid transparent;
    border-bottom: 4px solid transparent;
    border-right: 4px solid #666;
}
.tri-right {
    border-top: 4px solid transparent;
    border-bottom: 4px solid transparent;
    border-left: 4px solid #666;
}
.tri-dim.tri-left {
    border-right-color: #c0c0c0;
}
.tri-dim.tri-right {
    border-left-color: #c0c0c0;
}

/* sheet tabs */
.tabbar {
    display: flex;
    align-items: flex-start;
    flex: none;
    height: 27px;
    border-bottom: 1px solid #d4d4d4;
    background: #e6e6e6;
}
.sheet-nav {
    display: flex;
    align-items: center;
    justify-content: space-between;
    width: 100px;
    height: 24px;
    padding: 0 40px 0 27px;
}
.sheet-tab {
    width: 73px;
    height: 24px;
    line-height: 23px;
    border-bottom: 2px solid #217346;
    background: #fff;
    color: #217346;
    font-family: "Noto Sans", sans-serif;
    font-size: 13px;
    letter-spacing: .4px;
    text-align: center;
}
.add-sheet {
    margin: 4px 0 0 33px;
}
.grip-tab {
    margin: 8px 15px 0 566px;
}
.hscroll {
    display: flex;
    width: 489px;
    height: 15px;
    margin-top: 6px;
}
.hscroll .sb-btn {
    height: 15px;
}
.hthumb {
    flex: none;
    width: 431px;
    border: 1px solid #ababab;
    background: #fff;
}

/* status bar */
.statusbar {
    display: flex;
    align-items: center;
    flex: 1;
    background: #f3f3f3;
    color: #555;
}
.macro {
    margin-left: 9px;
}
.status-text {
    width: 103px;
    margin-left: 886px;
    letter-spacing: -.3px;
}
.view-btn {
    display: flex;
    align-items: center;
    justify-content: center;
    width: 38px;
    height: 100%;
}
.view-active {
    background: #c6c6c6;
}
.zoom {
    display: flex;
    align-items: center;
    margin-left: 6px;
}
.zoom-sign {
    position: relative;
    width: 6px;
    height: 2px;
    background: #666;
}
.zoom-plus::after {
    content: "";
    position: absolute;
    left: 2px;
    top: -2px;
    width: 2px;
    height: 6px;
    background: #666;
}
.zoom-track {
    position: relative;
    width: 100px;
    height: 1px;
    margin: 0 4px;
    background: #a0a0a0;
}
.zoom-thumb {
    position: absolute;
    left: 48px;
    top: -5px;
    width: 5px;
    height: 11px;
    background: #666;
}
.zoom-value {
    margin-left: 12px;
}
```
